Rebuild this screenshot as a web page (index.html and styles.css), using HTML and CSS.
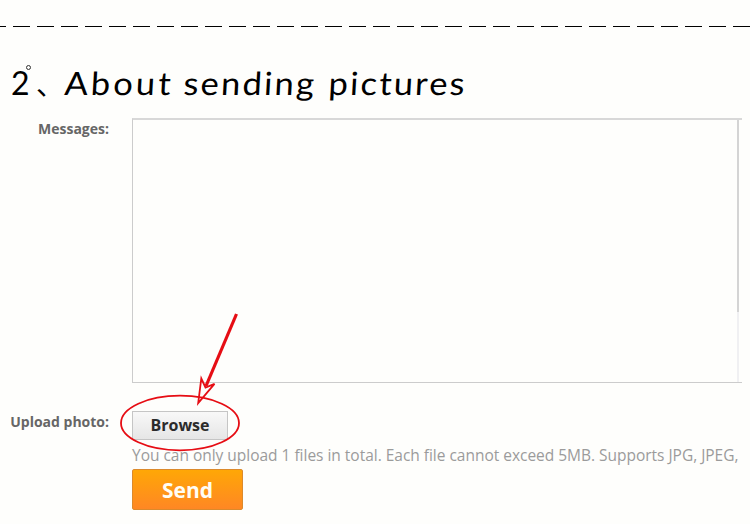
FILE: index.html
```html
<!DOCTYPE html>
<html lang="en">
<head>
    <meta charset="UTF-8">
    <meta name="viewport" content="width=device-width, initial-scale=1.0">
    <title>About sending pictures</title>
    <link rel="stylesheet" href="styles.css">
</head>
<body>
    <div class="divider"></div>
    <h1><span class="number">2</span><span class="comma">、</span><span class="word word-about">About</span><span class="word word-sending">sending</span><span class="word word-pictures">pictures</span><span class="ring"></span></h1>

    <form class="message-form">
        <div class="row message-row">
            <label for="message">Messages:</label>
            <div class="message-box">
                <textarea id="message"></textarea>
                <div class="edge"></div>
            </div>
        </div>
        <div class="row upload-row">
            <label>Upload photo:</label>
            <div class="upload">
                <button type="button" class="browse">Browse</button>
                <p class="hint">You can only upload 1 files in total. Each file cannot exceed 5MB. Supports JPG, JPEG,</p>
                <button type="button" class="send">Send</button>
            </div>
        </div>
    </form>

    <!-- Circle and arrow pointing at the browse button -->
    <svg class="marker" width="130" height="150" viewBox="115 305 130 150" fill="none" stroke="#e60d14">
        <ellipse cx="180" cy="423" rx="59" ry="27.3" stroke-width="1.8"/>
        <path d="M236.5 314 L206 386" stroke-width="3.2"/>
        <path d="M198.2 403 L201.3 378.5 L205.5 387.5 L214.5 383.8 Z" stroke-width="1.8"/>
    </svg>
</body>
</html>
```

FILE: styles.css
```css
body {
    margin: 0;
    height: 524px;
    overflow: hidden;
    position: relative;
    background-color: #fefefc;
    font-family: "Open Sans", "Noto Sans", sans-serif;
}
.divider {
    height: 1px;
    margin-top: 26px;
    background: repeating-linear-gradient(to right, #000 0, #000 17px, transparent 17px, transparent 24px);
    background-position: -11px 0;
    background-size: 1200px 1px;
}
h1 {
    display: flex;
    position: relative;
    height: 91px;
    margin: 0;
    padding-left: 11px;
    box-sizing: border-box;
    font: 400 32px/40px Lato, "Noto Sans CJK SC", sans-serif;
    padding-top: 36px;
    color: #000;
    white-space: nowrap;
}
.number {
    width: 25px;
}
.comma {
    width: 28px;
    font-family: "Noto Sans CJK SC", sans-serif;
    font-size: 28px;
}
.word {
    transform: scaleX(1.08) skewX(-3deg);
    transform-origin: 0 32px;
    letter-spacing: 2px;
}
.word-about {
    width: 119px;
    letter-spacing: 2.8px;
}
.word-sending {
    width: 145px;
}
.ring {
    position: absolute;
    left: 26px;
    top: 38px;
    width: 3px;
    height: 3px;
    border: 1px solid #333;
    border-radius: 50%;
}
.row {
    display: flex;
}
.row label {
    width: 109px;
    margin-right: 23px;
    text-align: right;
    font-size: 14px;
    line-height: 20px;
    font-weight: bold;
    color: #666;
}
.message-box {
    position: relative;
    width: 610px;
    height: 265px;
}
.message-row label {
    padding-top: 1px;
}
textarea {
    display: block;
    width: 100%;
    height: 100%;
    box-sizing: border-box;
    border: solid #ccc;
    border-width: 2px 0 1px 1px;
    border-top-color: #d8d8d8;
    background: transparent;
    resize: none;
    outline: none;
}
.edge {
    position: absolute;
    top: 2px;
    right: 3px;
    bottom: 1px;
    width: 2px;
    background: linear-gradient(#d4d4d4 192px, #f0f0f2 192px);
}
.upload-row {
    margin-top: 28px;
}
.upload-row label {
    padding-top: 1px;
}
.upload {
    white-space: nowrap;
}
button {
    display: block;
    box-sizing: border-box;
    font-family: inherit;
    font-weight: bold;
    padding: 0;
}
.browse {
    width: 96px;
    height: 29px;
    border: 1px solid #c5c5c5;
    background: linear-gradient(#f8f8f8, #e6e6e6);
    color: #2b2b2b;
    font-size: 16px;
    line-height: 25px;
    padding-bottom: 1px;
}
.hint {
    margin: 5px 0 3px;
    font-size: 15.5px;
    line-height: 21px;
    letter-spacing: -0.02px;
    color: #9b9b9b;
}
.send {
    width: 111px;
    height: 41px;
    border: 1px solid #dc8a2c;
    border-radius: 2px;
    background: linear-gradient(#ffa706, #ff8724);
    color: #fffdf5;
    font-size: 21px;
}
.marker {
    position: absolute;
    left: 115px;
    top: 305px;
}
```
